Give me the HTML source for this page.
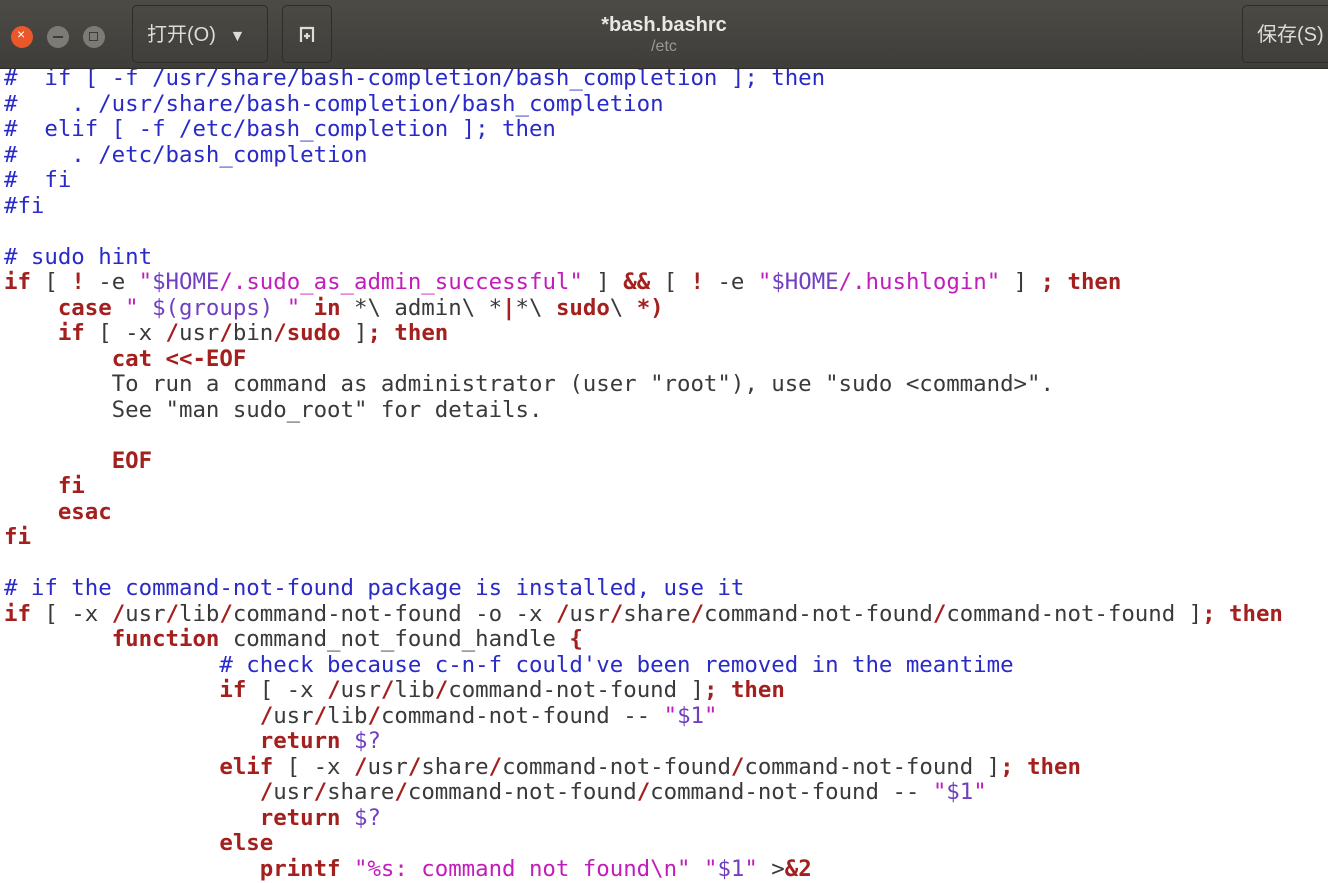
<!DOCTYPE html>
<html><head><meta charset="utf-8"><style>
html,body{margin:0;padding:0;width:1328px;height:883px;overflow:hidden;background:#fff}
#hdr{position:absolute;left:0;top:0;width:1328px;height:68px;background:linear-gradient(#4d4b46,#3e3d39);border-bottom:1px solid #2d2c29;z-index:2;font-family:"Liberation Sans","Noto Sans CJK SC",sans-serif}
.wb{position:absolute;top:26px;width:22px;height:22px;border-radius:50%}
.btn{position:absolute;top:5px;height:58px;border:1px solid #2e2d2a;border-radius:5px;background:linear-gradient(#4a4944,#403f3b);color:#dcdcd8;font-size:20px;line-height:58px;box-sizing:border-box}
#code{position:absolute;left:4px;top:66px;margin:0;font-family:"DejaVu Sans Mono",monospace;font-size:22.4px;line-height:25.5px;color:#3a3a3a;white-space:pre;letter-spacing:-0.02px}
.c{color:#2a2ac8}.k{color:#a3201e;font-weight:bold}.s{color:#c21dbb}.v{color:#7040c0}.p{color:#a3201e;font-weight:bold}
</style></head><body>
<div id="hdr">
 <div class="wb" style="left:11px;background:#e9572b"><span style="position:absolute;left:6px;top:0px;color:#fff;font-size:14px">×</span></div>
 <div class="wb" style="left:47px;background:#7d7b76"><div style="position:absolute;left:6px;top:10px;width:10px;height:2px;background:#3d3c38"></div></div>
 <div class="wb" style="left:83px;background:#7d7b76"><div style="position:absolute;left:6px;top:6px;width:7px;height:7px;border:1.5px solid #3d3c38"></div></div>
 <div class="btn" style="left:132px;width:136px;padding-left:14px">打开(O) <span style="font-size:16px;margin-left:8px">▼</span></div>
 <div class="btn" style="left:282px;width:50px;text-align:center;font-weight:bold">
  <svg width="18" height="18" viewBox="0 0 18 18" style="margin-top:20px"><path d="M3 16V2h12v14M9 7v6M6 10h6" stroke="#dcdcd8" stroke-width="2.2" fill="none"/></svg></div>
 <div style="position:absolute;left:0;width:1328px;top:14px;text-align:center;color:#e8e8e4;font-size:20px;font-weight:bold">*bash.bashrc</div>
 <div style="position:absolute;left:0;width:1328px;top:38px;text-align:center;color:#9a9994;font-size:16px">/etc</div>
 <div class="btn" style="left:1242px;width:110px;padding-left:14px">保存(S)</div>
</div>
<pre id="code"><span class="c">#  if [ -f /usr/share/bash-completion/bash_completion ]; then
#    . /usr/share/bash-completion/bash_completion
#  elif [ -f /etc/bash_completion ]; then
#    . /etc/bash_completion
#  fi
#fi</span>

<span class="c"># sudo hint</span>
<span class="k">if</span> [ <span class="k">!</span> -e <span class="s">"</span><span class="v">$HOME</span><span class="s">/.sudo_as_admin_successful"</span> ] <span class="k">&amp;&amp;</span> [ <span class="k">!</span> -e <span class="s">"</span><span class="v">$HOME</span><span class="s">/.hushlogin"</span> ] <span class="k">;</span> <span class="k">then</span>
    <span class="k">case</span> <span class="s">" </span><span class="v">$(groups)</span><span class="s"> "</span> <span class="k">in</span> *\ admin\ *<span class="k">|</span>*\ <span class="k">sudo</span>\ <span class="k">*)</span>
    <span class="k">if</span> [ -x <span class="p">/</span>usr<span class="p">/</span>bin<span class="p">/sudo</span> ]<span class="k">;</span> <span class="k">then</span>
        <span class="k">cat &lt;&lt;-EOF</span>
        To run a command as administrator (user "root"), use "sudo &lt;command&gt;".
        See "man sudo_root" for details.

        <span class="k">EOF</span>
    <span class="k">fi</span>
    <span class="k">esac</span>
<span class="k">fi</span>

<span class="c"># if the command-not-found package is installed, use it</span>
<span class="k">if</span> [ -x <span class="p">/</span>usr<span class="p">/</span>lib<span class="p">/</span>command-not-found -o -x <span class="p">/</span>usr<span class="p">/</span>share<span class="p">/</span>command-not-found<span class="p">/</span>command-not-found ]<span class="k">;</span> <span class="k">then</span>
        <span class="k">function</span> command_not_found_handle <span class="k">{</span>
                <span class="c"># check because c-n-f could've been removed in the meantime</span>
                <span class="k">if</span> [ -x <span class="p">/</span>usr<span class="p">/</span>lib<span class="p">/</span>command-not-found ]<span class="k">;</span> <span class="k">then</span>
                   <span class="p">/</span>usr<span class="p">/</span>lib<span class="p">/</span>command-not-found -- <span class="s">"</span><span class="v">$1</span><span class="s">"</span>
                   <span class="k">return</span> <span class="v">$?</span>
                <span class="k">elif</span> [ -x <span class="p">/</span>usr<span class="p">/</span>share<span class="p">/</span>command-not-found<span class="p">/</span>command-not-found ]<span class="k">;</span> <span class="k">then</span>
                   <span class="p">/</span>usr<span class="p">/</span>share<span class="p">/</span>command-not-found<span class="p">/</span>command-not-found -- <span class="s">"</span><span class="v">$1</span><span class="s">"</span>
                   <span class="k">return</span> <span class="v">$?</span>
                <span class="k">else</span>
                   <span class="k">printf</span> <span class="s">"%s: command not found\n"</span> <span class="s">"</span><span class="v">$1</span><span class="s">"</span> &gt;<span class="k">&amp;2</span></pre>
</body></html>
